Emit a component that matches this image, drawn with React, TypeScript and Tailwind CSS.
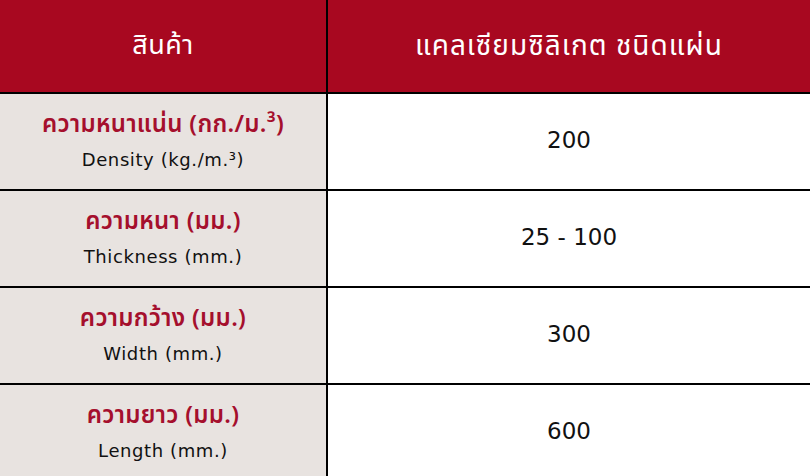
const rows = [
  { th: "ความหนาแน่น (กก./ม.³)", en: "Density (kg./m.³)", value: "200" },
  { th: "ความหนา (มม.)", en: "Thickness (mm.)", value: "25 - 100" },
  { th: "ความกว้าง (มม.)", en: "Width (mm.)", value: "300" },
  { th: "ความยาว (มม.)", en: "Length (mm.)", value: "600" },
];

const thai = { fontFamily: '"Noto Sans", "Noto Sans Thai", sans-serif' };
const latin = { fontFamily: '"DejaVu Sans", "Noto Sans", sans-serif' };

export default function App() {
  return (
    <div className="w-[810px] h-[476px] overflow-hidden bg-white">
      {/* Header */}
      <div className="flex h-[94px] bg-[#a80820] border-b-2 border-black text-white" style={thai}>
        <div className="w-[328px] border-r-2 border-black flex items-center justify-center pb-[4px] text-[27px] tracking-[0.5px]">
          สินค้า
        </div>
        <div className="flex-1 flex items-center justify-center pb-[4px] text-[28px] tracking-[1px]">
          แคลเซียมซิลิเกต ชนิดแผ่น
        </div>
      </div>

      {/* Body */}
      {rows.map((row) => (
        <div key={row.en} className="flex h-[97px] border-b-2 border-black">
          <div className="w-[328px] border-r-2 border-black bg-[#e8e3e0] flex flex-col items-center justify-center gap-[9px] pb-[2px]">
            <div
              className="text-[24px] font-semibold text-[#a50f2d] leading-[30px] tracking-[0.3px]"
              style={thai}
            >
              {row.th}
            </div>
            <div className="text-[18px] text-[#111] leading-[26px] tracking-[0.6px]" style={latin}>
              {row.en}
            </div>
          </div>
          <div
            className="flex-1 flex items-center justify-center pb-[3px] text-[23px] text-[#111]"
            style={latin}
          >
            {row.value}
          </div>
        </div>
      ))}
    </div>
  );
}
